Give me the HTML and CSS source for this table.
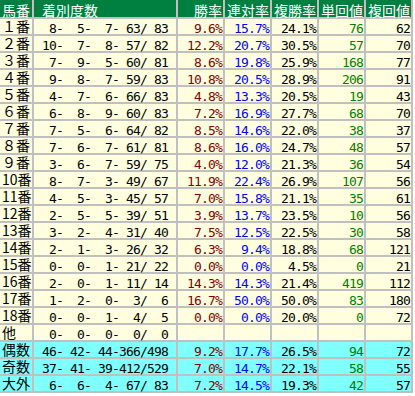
FILE: index.html
```html
<!DOCTYPE html>
<html lang="ja">
<head>
<meta charset="utf-8">
<title>馬番別成績</title>
<link rel="stylesheet" href="styles.css">
</head>
<body>
<table class="stats">
<thead>
<tr><th class="c-no">馬番</th><th class="c-rec">着別度数</th><th>勝率</th><th>連対率</th><th>複勝率</th><th>単回値</th><th>複回値</th></tr>
</thead>
<tbody>
<tr><td class="c-no">１番</td><td class="c-rec">  8-  5-  7- 63/ 83</td><td class="win">9.6%</td><td class="ren">15.7%</td><td class="fuku">24.1%</td><td class="tan">76</td><td class="fret">62</td></tr>
<tr><td class="c-no">２番</td><td class="c-rec"> 10-  7-  8- 57/ 82</td><td class="win">12.2%</td><td class="ren">20.7%</td><td class="fuku">30.5%</td><td class="tan">57</td><td class="fret">70</td></tr>
<tr><td class="c-no">３番</td><td class="c-rec">  7-  9-  5- 60/ 81</td><td class="win">8.6%</td><td class="ren">19.8%</td><td class="fuku">25.9%</td><td class="tan">168</td><td class="fret">77</td></tr>
<tr><td class="c-no">４番</td><td class="c-rec">  9-  8-  7- 59/ 83</td><td class="win">10.8%</td><td class="ren">20.5%</td><td class="fuku">28.9%</td><td class="tan">206</td><td class="fret">91</td></tr>
<tr><td class="c-no">５番</td><td class="c-rec">  4-  7-  6- 66/ 83</td><td class="win">4.8%</td><td class="ren">13.3%</td><td class="fuku">20.5%</td><td class="tan">19</td><td class="fret">43</td></tr>
<tr><td class="c-no">６番</td><td class="c-rec">  6-  8-  9- 60/ 83</td><td class="win">7.2%</td><td class="ren">16.9%</td><td class="fuku">27.7%</td><td class="tan">68</td><td class="fret">70</td></tr>
<tr><td class="c-no">７番</td><td class="c-rec">  7-  5-  6- 64/ 82</td><td class="win">8.5%</td><td class="ren">14.6%</td><td class="fuku">22.0%</td><td class="tan">38</td><td class="fret">37</td></tr>
<tr><td class="c-no">８番</td><td class="c-rec">  7-  6-  7- 61/ 81</td><td class="win">8.6%</td><td class="ren">16.0%</td><td class="fuku">24.7%</td><td class="tan">48</td><td class="fret">57</td></tr>
<tr><td class="c-no">９番</td><td class="c-rec">  3-  6-  7- 59/ 75</td><td class="win">4.0%</td><td class="ren">12.0%</td><td class="fuku">21.3%</td><td class="tan">36</td><td class="fret">54</td></tr>
<tr><td class="c-no">10番</td><td class="c-rec">  8-  7-  3- 49/ 67</td><td class="win">11.9%</td><td class="ren">22.4%</td><td class="fuku">26.9%</td><td class="tan">107</td><td class="fret">56</td></tr>
<tr><td class="c-no">11番</td><td class="c-rec">  4-  5-  3- 45/ 57</td><td class="win">7.0%</td><td class="ren">15.8%</td><td class="fuku">21.1%</td><td class="tan">35</td><td class="fret">61</td></tr>
<tr><td class="c-no">12番</td><td class="c-rec">  2-  5-  5- 39/ 51</td><td class="win">3.9%</td><td class="ren">13.7%</td><td class="fuku">23.5%</td><td class="tan">10</td><td class="fret">56</td></tr>
<tr><td class="c-no">13番</td><td class="c-rec">  3-  2-  4- 31/ 40</td><td class="win">7.5%</td><td class="ren">12.5%</td><td class="fuku">22.5%</td><td class="tan">30</td><td class="fret">58</td></tr>
<tr><td class="c-no">14番</td><td class="c-rec">  2-  1-  3- 26/ 32</td><td class="win">6.3%</td><td class="ren">9.4%</td><td class="fuku">18.8%</td><td class="tan">68</td><td class="fret">121</td></tr>
<tr><td class="c-no">15番</td><td class="c-rec">  0-  0-  1- 21/ 22</td><td class="win">0.0%</td><td class="ren">0.0%</td><td class="fuku">4.5%</td><td class="tan">0</td><td class="fret">21</td></tr>
<tr><td class="c-no">16番</td><td class="c-rec">  2-  0-  1- 11/ 14</td><td class="win">14.3%</td><td class="ren">14.3%</td><td class="fuku">21.4%</td><td class="tan">419</td><td class="fret">112</td></tr>
<tr><td class="c-no">17番</td><td class="c-rec">  1-  2-  0-  3/  6</td><td class="win">16.7%</td><td class="ren">50.0%</td><td class="fuku">50.0%</td><td class="tan">83</td><td class="fret">180</td></tr>
<tr><td class="c-no">18番</td><td class="c-rec">  0-  0-  1-  4/  5</td><td class="win">0.0%</td><td class="ren">0.0%</td><td class="fuku">20.0%</td><td class="tan">0</td><td class="fret">72</td></tr>
<tr><td class="c-no">他</td><td class="c-rec">  0-  0-  0-  0/  0</td><td class="win"></td><td class="ren"></td><td class="fuku"></td><td class="tan"></td><td class="fret"></td></tr>
<tr class="sum"><td class="c-no">偶数</td><td class="c-rec"> 46- 42- 44-366/498</td><td class="win">9.2%</td><td class="ren">17.7%</td><td class="fuku">26.5%</td><td class="tan">94</td><td class="fret">72</td></tr>
<tr class="sum"><td class="c-no">奇数</td><td class="c-rec"> 37- 41- 39-412/529</td><td class="win">7.0%</td><td class="ren">14.7%</td><td class="fuku">22.1%</td><td class="tan">58</td><td class="fret">55</td></tr>
<tr class="sum"><td class="c-no">大外</td><td class="c-rec">  6-  6-  4- 67/ 83</td><td class="win">7.2%</td><td class="ren">14.5%</td><td class="fuku">19.3%</td><td class="tan">42</td><td class="fret">57</td></tr>
</tbody>
</table>
</body>
</html>
```

FILE: styles.css
```css
html, body {
  margin: 0;
  padding: 0;
  background: #ffffff;
}

.stats {
  border-collapse: separate;
  border-spacing: 0;
  table-layout: fixed;
  width: 413px;
}

.stats th,
.stats td {
  box-sizing: border-box;
  padding: 0 1px;
  border-right: 2px solid #c0c0c0;
  border-bottom: 2px solid #c0c0c0;
  white-space: pre;
  text-align: right;
  vertical-align: top;
}

.stats th {
  width: 47px;
  height: 19px;
  padding-top: 3px;
  background: #008040;
  color: #ffffff;
  font-family: "Noto Sans CJK JP", sans-serif;
  font-size: 14px;
  font-weight: normal;
  line-height: 14px;
}

.stats th.c-no {
  width: 34px;
  text-align: left;
  padding-left: 2px;
}

.stats th.c-rec {
  width: 144px;
  text-align: left;
  padding-left: 8px;
}

.stats td {
  height: 17px;
  padding-top: 4px;
  background: #ffffe0;
  color: #000000;
  font-family: "DejaVu Sans Mono", monospace;
  font-size: 13px;
  line-height: 11px;
  letter-spacing: -0.83px;
}

.stats .sum td {
  background: #80ffff;
}

.stats td.c-no {
  text-align: left;
  padding-top: 0;
  padding-left: 2px;
  font-family: "Noto Sans CJK JP", sans-serif;
  font-size: 14px;
  line-height: 15px;
  letter-spacing: 0;
}

.stats td.c-rec {
  text-align: left;
}

.stats td.win {
  color: #800000;
}

.stats td.ren {
  color: #0000ff;
}

.stats td.fuku,
.stats td.fret {
  color: #000000;
}

.stats td.tan {
  color: #008000;
}
```
